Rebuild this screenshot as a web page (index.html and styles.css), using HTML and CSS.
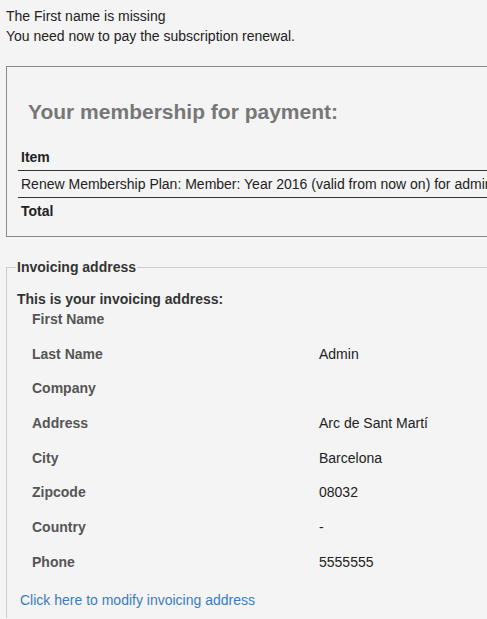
FILE: index.html
```html
<!DOCTYPE html>
<html>
<head>
	<title>Membership renewal</title>
	<link rel="stylesheet" href="styles.css">
</head>
<body>
	<div class="messages">
		<div>The First name is missing</div>
		<div>You need now to pay the subscription renewal.</div>
	</div>

	<div class="payment">
		<h2>Your membership for payment:</h2>
		<table class="items">
			<tr><th>Item</th></tr>
			<tr><td>Renew Membership Plan: Member: Year 2016 (valid from now on) for admin</td></tr>
			<tr><th>Total</th></tr>
		</table>
	</div>

	<fieldset class="invoicing">
		<legend>Invoicing address</legend>
		<p class="intro">This is your invoicing address:</p>
		<table class="address">
			<tr><th>First Name</th><td></td></tr>
			<tr><th>Last Name</th><td>Admin</td></tr>
			<tr><th>Company</th><td></td></tr>
			<tr><th>Address</th><td>Arc de Sant Martí</td></tr>
			<tr><th>City</th><td>Barcelona</td></tr>
			<tr><th>Zipcode</th><td>08032</td></tr>
			<tr><th>Country</th><td>-</td></tr>
			<tr><th>Phone</th><td>5555555</td></tr>
		</table>
		<a class="modify" href="#">Click here to modify invoicing address</a>
	</fieldset>
</body>
</html>
```

FILE: styles.css
```css
html, body{
  overflow:hidden;
}
body{
  margin:0;
  padding:6px 0 0 6px;
  background-color:#f4f4f4;
  font-family:"Liberation Sans", Arial, sans-serif;
  font-size:14px;
  line-height:16px;
  color:#222;
  width:720px;
}
.messages div{
  line-height:20px;
}
.payment{
  margin-top:20px;
  border:1px solid #888;
  border-right:none;
  padding:31px 0 12px 11px;
}
.payment h2{
  margin:0 0 18px 10px;
  font-size:21px;
  color:#777;
  line-height:28px;
}
.items{
  border-collapse:collapse;
  width:100%;
}
.items th,
.items td{
  text-align:left;
  padding:4px 3px;
  line-height:18px;
  white-space:nowrap;
}
.items tr:first-child th{
  border-bottom:1px solid #333;
}
.items td{
  border-bottom:1px solid #333;
}
.invoicing{
  margin:22px 0 0 0;
  border:none;
  border-top:1px solid #ccc;
  border-left:1px solid #ccc;
  padding:0 0 10px 10px;
}
.invoicing legend{
  font-weight:bold;
  color:#333;
  padding:0 1px;
  margin-left:-1px;
}
.intro{
  margin:16px 0 0 0;
  font-weight:bold;
  color:#333;
}
.address{
  border-collapse:collapse;
  margin-left:15px;
}
.address th,
.address td{
  padding:4px 0 14.7px 0;
  text-align:left;
  vertical-align:top;
}
.address th{
  width:287px;
  color:#555;
}
.modify{
  display:block;
  margin:7px 0 0 3px;
  color:#3a7dc0;
  text-decoration:none;
}
```
